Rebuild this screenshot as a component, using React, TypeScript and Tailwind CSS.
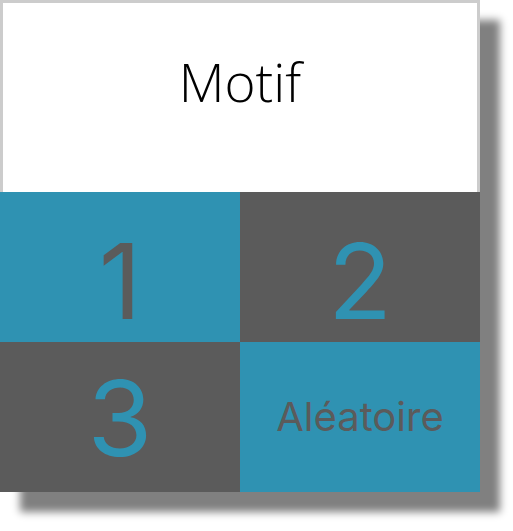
export default function App() {
  return (
    <div className="h-[531px] w-[513px] bg-white">
      <div className="w-[480px] bg-[#cccccc] pt-[3px] shadow-[20px_20px_8px_#808080]">
        <div className="mx-[3px] flex h-[189px] items-start justify-center bg-white pt-[46px]">
          <span className="font-['Open_Sans',sans-serif] text-[53px] leading-[66px] font-light text-black">
            Motif
          </span>
        </div>
        <div className="grid grid-cols-2 grid-rows-[150px_150px] font-['Inter',sans-serif] font-normal">
          <div className="flex items-center justify-center bg-[#2f92b2] pt-[26px] text-[105px] leading-none text-[#5b5b5b]">
            1
          </div>
          <div className="flex items-center justify-center bg-[#5b5b5b] pt-[26px] text-[105px] leading-none text-[#2f92b2]">
            2
          </div>
          <div className="flex items-center justify-center bg-[#5b5b5b] text-[105px] leading-none text-[#2f92b2]">
            3
          </div>
          <div className="flex items-center justify-center bg-[#2f92b2] text-[40px] leading-none text-[#5b5b5b]">
            Aléatoire
          </div>
        </div>
      </div>
    </div>
  );
}
